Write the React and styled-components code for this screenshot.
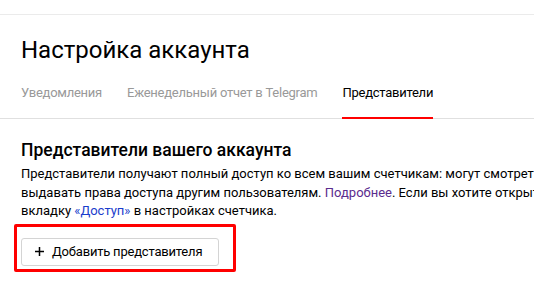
import React from "react";
import styled, { createGlobalStyle } from "styled-components";

const GlobalStyle = createGlobalStyle`
  body {
    margin: 0;
    background: #fff;
    overflow: hidden;
    font-family: Roboto, Arial, sans-serif;
    color: #000;
  }
`

const Page = styled.div`
  width: 534px;
  height: 289px;
  overflow: hidden;
`
const TopLine = styled.div`
  height: 14px;
  border-bottom: 1px solid #ebebeb;
`
const Header = styled.div`
  padding: 0 0 0 21px;
`
const Title = styled.h1`
  margin: 0;
  padding-top: 19px;
  font-size: 24px;
  line-height: 32px;
  font-weight: 400;
`
const Tabs = styled.div`
  display: flex;
  gap: 25px;
  margin-top: 18px;
  padding-left: 21px;
  border-bottom: 1px solid #e0e0e0;
`
const Tab = styled.div`
  font-size: 13px;
  letter-spacing: -0.25px;
  line-height: 18px;
  padding-bottom: 15px;
  margin-bottom: -1px;
  color: ${(p) => (p.$active ? "#000" : "#999")};
  border-bottom: 2px solid ${(p) => (p.$active ? "#f00" : "transparent")};
`
const Section = styled.div`
  padding: 19px 0 0 21px;
`
const SectionTitle = styled.h2`
  margin: 0;
  font-size: 17.5px;
  line-height: 24px;
  font-weight: 500;
`
const Text = styled.p`
  margin: 3px 0 0;
  font-size: 13px;
  line-height: 18.5px;
  white-space: nowrap;
`
const Link = styled.a`
  color: ${(p) => (p.$visited ? "#5b2c8e" : "#1a3dcc")};
  text-decoration: none;
`
const ButtonWrap = styled.div`
  position: relative;
  display: inline-block;
  margin-top: 17px;
`
const Button = styled.button`
  display: flex;
  align-items: center;
  gap: 8px;
  height: 28px;
  padding: 0 16px 0 13px;
  border: 1px solid #d4d4d4;
  border-radius: 3px;
  background: #fff;
  font-family: inherit;
  font-size: 13px;
  letter-spacing: -0.2px;
  color: #000;
`
const Highlight = styled.div`
  position: absolute;
  left: -7px;
  top: -14px;
  width: 216px;
  height: 42px;
  border: 3px solid #f00;
  border-radius: 2px;
  pointer-events: none;
`

const Plus = () => (
  <svg width="9" height="9" viewBox="0 0 9 9">
    <path d="M4.5 0v9M0 4.5h9" stroke="#000" strokeWidth="1.5" />
  </svg>
)

const App = () => {
  return (
    <Page>
      <GlobalStyle />
      <TopLine />
      <Header>
        <Title>Настройка аккаунта</Title>
      </Header>
      <Tabs>
        <Tab>Уведомления</Tab>
        <Tab>Еженедельный отчет в Telegram</Tab>
        <Tab $active>Представители</Tab>
      </Tabs>
      <Section>
        <SectionTitle>Представители вашего аккаунта</SectionTitle>
        <Text>
          Представители получают полный доступ ко всем вашим счетчикам: могут смотреть статистику, изменять настройки и
          <br />
          выдавать права доступа другим пользователям. <Link $visited href="#">Подробнее</Link>. Если вы хотите открыть доступ к одному счетчику, перейдите на
          <br />
          вкладку <Link href="#">«Доступ»</Link> в настройках счетчика.
        </Text>
        <ButtonWrap>
          <Button>
            <Plus />
            Добавить представителя
          </Button>
          <Highlight />
        </ButtonWrap>
      </Section>
    </Page>
  )
}

export default App
